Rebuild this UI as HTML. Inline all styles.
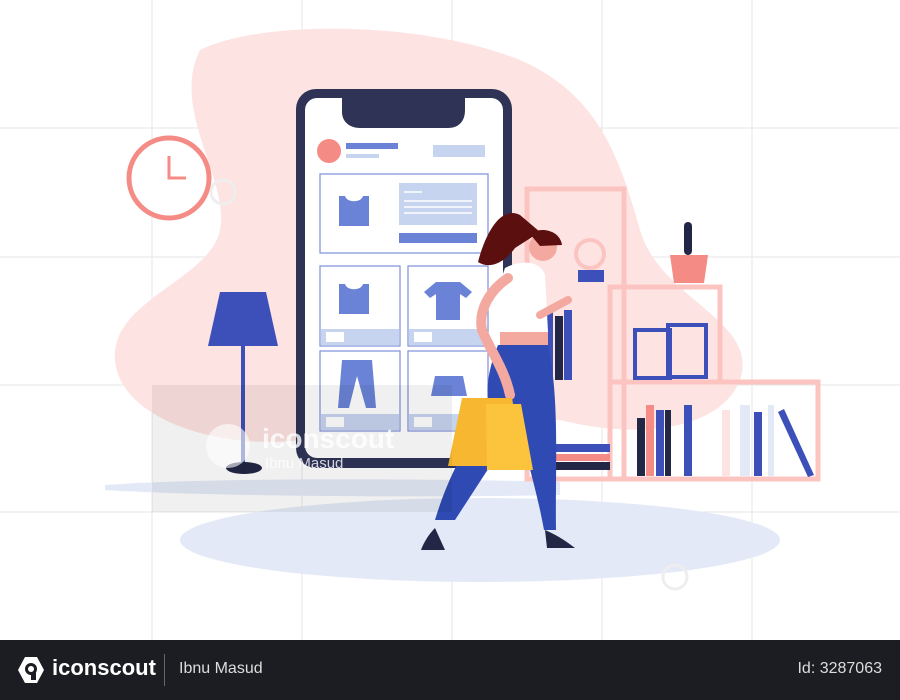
<!DOCTYPE html>
<html><head><meta charset="utf-8"><style>
html,body{margin:0;padding:0;width:900px;height:700px;overflow:hidden;background:#fff;font-family:"Liberation Sans",sans-serif}
.bar{position:absolute;left:0;top:640px;width:900px;height:60px;background:#1c1d22;color:#fff}
</style></head><body>
<svg width="900" height="640" style="position:absolute;left:0;top:0" xmlns="http://www.w3.org/2000/svg">
<g stroke="#e6e6e6" stroke-width="1">
<line x1="152" y1="0" x2="152" y2="640"/><line x1="302" y1="0" x2="302" y2="640"/><line x1="452" y1="0" x2="452" y2="640"/><line x1="602" y1="0" x2="602" y2="640"/><line x1="752" y1="0" x2="752" y2="640"/>
<line x1="0" y1="128" x2="900" y2="128"/><line x1="0" y1="257" x2="900" y2="257"/><line x1="0" y1="385" x2="900" y2="385"/><line x1="0" y1="512" x2="900" y2="512"/>
</g>
<path d="M200 50 C260 20 420 20 520 60 C600 95 620 160 640 230 C660 300 760 320 740 380 C720 430 640 440 560 420 L300 440 C220 450 120 420 115 360 C110 300 210 280 220 230 C230 180 170 110 200 50 Z" fill="#fde3e2"/>
<ellipse cx="480" cy="540" rx="300" ry="42" fill="#e3e9f6"/>
<path d="M105 485 C200 478 420 478 560 482 L560 495 C420 498 200 496 105 490 Z" fill="#e3e9f6"/>
<circle cx="169" cy="178" r="40" fill="#fff" stroke="#f58b85" stroke-width="5"/>
<path d="M169 156 V178 H186" stroke="#f58b85" stroke-width="3" fill="none"/>
<polygon points="220,292 266,292 278,346 208,346" fill="#3d4fb8"/>
<rect x="241" y="346" width="4" height="118" fill="#3d4fb8"/>
<ellipse cx="244" cy="468" rx="18" ry="6" fill="#232746"/>
<rect x="296" y="89" width="216" height="379" rx="20" fill="#2f3457"/>
<rect x="305" y="98" width="198" height="360" rx="12" fill="#fff"/>
<path d="M342 98 H465 V110 C465 122 458 128 448 128 H360 C350 128 342 122 342 112 Z" fill="#2f3457"/>
<circle cx="329" cy="151" r="12" fill="#f58b85"/>
<rect x="346" y="143" width="52" height="6" fill="#6a83d6"/>
<rect x="346" y="154" width="33" height="4" fill="#c7d4ef"/>
<rect x="433" y="145" width="52" height="12" fill="#c7d4ef"/>
<rect x="320" y="174" width="168" height="79" fill="none" stroke="#7d8fd8" stroke-width="1.2"/>
<path d="M339 196 h6 c2 7 16 7 18 0 h6 v30 h-30 z" fill="#6a83d6"/>
<rect x="399" y="183" width="78" height="42" fill="#c7d4ef"/>
<g stroke="#fff" stroke-width="1.5"><line x1="404" y1="192" x2="422" y2="192"/><line x1="404" y1="201" x2="472" y2="201"/><line x1="404" y1="207" x2="472" y2="207"/><line x1="404" y1="213" x2="472" y2="213"/></g>
<rect x="399" y="233" width="78" height="10" fill="#6a83d6"/>
<rect x="320" y="266" width="80" height="80" fill="none" stroke="#7d8fd8" stroke-width="1.2"/>
<rect x="408" y="266" width="80" height="80" fill="none" stroke="#7d8fd8" stroke-width="1.2"/>
<rect x="320" y="351" width="80" height="80" fill="none" stroke="#7d8fd8" stroke-width="1.2"/>
<rect x="408" y="351" width="80" height="80" fill="none" stroke="#7d8fd8" stroke-width="1.2"/>
<g fill="#c7d4ef"><rect x="321" y="329" width="78" height="16"/><rect x="409" y="329" width="78" height="16"/><rect x="321" y="414" width="78" height="16"/><rect x="409" y="414" width="78" height="16"/></g>
<g fill="#fff"><rect x="326" y="332" width="18" height="10"/><rect x="414" y="332" width="18" height="10"/><rect x="326" y="417" width="18" height="10"/><rect x="414" y="417" width="18" height="10"/></g>
<path d="M339 284 h6 c2 7 16 7 18 0 h6 v30 h-30 z" fill="#6a83d6"/>
<path d="M436 282 h24 l12 10 -6 6 -6 -4 v26 h-24 v-26 l-6 4 -6 -6 z" fill="#6a83d6"/>
<path d="M342 360 h30 l4 48 h-10 l-9 -32 -8 32 h-11 z" fill="#6a83d6"/>
<path d="M435 376 h28 l4 20 h-36 z" fill="#6a83d6"/>
<rect x="527" y="189" width="97" height="290" fill="none" stroke="#fbc4c0" stroke-width="5"/>
<rect x="610" y="287" width="110" height="95" fill="none" stroke="#fbc4c0" stroke-width="5"/>
<rect x="610" y="382" width="208" height="97" fill="none" stroke="#fbc4c0" stroke-width="5"/>
<rect x="635" y="330" width="35" height="48" fill="none" stroke="#3d4fb8" stroke-width="4"/>
<rect x="668" y="325" width="38" height="52" fill="none" stroke="#3d4fb8" stroke-width="4"/>
<path d="M670 255 h38 l-4 28 h-30 z" fill="#f58b85"/>
<rect x="684" y="222" width="8" height="33" rx="4" fill="#232746"/>
<circle cx="590" cy="254" r="14" fill="none" stroke="#fbc4c0" stroke-width="4"/>
<rect x="578" y="270" width="26" height="12" fill="#3d4fb8"/>
<g>
<rect x="637" y="418" width="8" height="58" fill="#232746"/><rect x="646" y="405" width="8" height="71" fill="#f58b85"/><rect x="656" y="410" width="8" height="66" fill="#3d4fb8"/><rect x="665" y="410" width="6" height="66" fill="#232746"/>
<rect x="684" y="405" width="8" height="71" fill="#3d4fb8"/><rect x="722" y="410" width="8" height="66" fill="#fde3e2"/><rect x="740" y="405" width="10" height="71" fill="#e3e9f6"/><rect x="754" y="412" width="8" height="64" fill="#3d4fb8"/><rect x="768" y="405" width="6" height="71" fill="#e3e9f6"/>
<path d="M778 412 l6 -3 30 66 -6 2 z" fill="#3d4fb8"/>
</g>
<rect x="545" y="312" width="8" height="68" fill="#3d4fb8"/><rect x="555" y="316" width="8" height="64" fill="#232746"/><rect x="564" y="310" width="8" height="70" fill="#3d4fb8"/>
<rect x="552" y="444" width="58" height="8" fill="#3d4fb8"/><rect x="552" y="454" width="58" height="7" fill="#f58b85"/><rect x="552" y="462" width="58" height="8" fill="#232746"/>
<path d="M520 215 C500 205 485 235 478 262 C490 270 505 262 515 248 L540 232 Z" fill="#5c0f0f"/>
<circle cx="543" cy="247" r="14" fill="#f4a9a0"/>
<path d="M530 234 C540 226 560 230 562 245 L540 246 Z" fill="#5c0f0f"/>
<path d="M505 268 C520 260 540 260 545 275 L548 332 H502 C500 310 498 285 505 268 Z" fill="#fff"/>
<rect x="500" y="332" width="48" height="14" fill="#f4a9a0"/>
<path d="M498 345 H548 C560 400 555 470 556 530 H544 C535 480 520 440 520 420 L455 520 H435 C450 470 470 440 490 410 C485 390 488 370 498 345 Z" fill="#2f4bb3"/>
<path d="M508 278 C490 290 478 310 482 330 C490 350 505 370 510 395" stroke="#f4a9a0" stroke-width="10" fill="none" stroke-linecap="round"/>
<path d="M540 315 L568 300" stroke="#f4a9a0" stroke-width="8" stroke-linecap="round"/>
<path d="M435 528 c-10 10 -14 22 -14 22 h24 z" fill="#232746"/>
<path d="M545 530 l2 18 h28 c-8 -6 -16 -12 -30 -18z" fill="#232746"/>
<path d="M462 398 h50 l12 68 h-76 z" fill="#f7b731"/>
<path d="M486 404 h35 l12 66 h-46 z" fill="#fcc43d"/>
<rect x="152" y="385" width="300" height="127" fill="#000" opacity="0.06"/>
<text x="262" y="448" font-size="28" font-weight="bold" fill="#fff" opacity="0.8">iconscout</text>
<text x="265" y="468" font-size="15" fill="#fff" opacity="0.8">Ibnu Masud</text>
<circle cx="228" cy="446" r="22" fill="#fff" opacity="0.6"/>
<circle cx="223" cy="192" r="12" fill="none" stroke="#eee" stroke-width="3"/>
<circle cx="675" cy="577" r="12" fill="none" stroke="#eee" stroke-width="3"/>
</svg>
<div class="bar">
<svg style="position:absolute;left:17px;top:16px" width="28" height="28" viewBox="0 0 28 28"><polygon points="8,1 20,1 27,14 20,27 8,27 1,14" fill="#fff"/><circle cx="14" cy="13" r="6" fill="#1c1d22"/><circle cx="14" cy="13" r="3" fill="#fff"/><rect x="14" y="16" width="5" height="8" fill="#1c1d22"/></svg>
<div style="position:absolute;left:52px;top:15px;font-size:22px;font-weight:bold">iconscout</div>
<div style="position:absolute;left:164px;top:14px;width:1px;height:32px;background:#666"></div>
<div style="position:absolute;left:179px;top:20px;font-size:16px;color:#ddd">Ibnu Masud</div>
<div style="position:absolute;right:18px;top:20px;font-size:16px;color:#ddd">Id: 3287063</div>
</div>
</body></html>
